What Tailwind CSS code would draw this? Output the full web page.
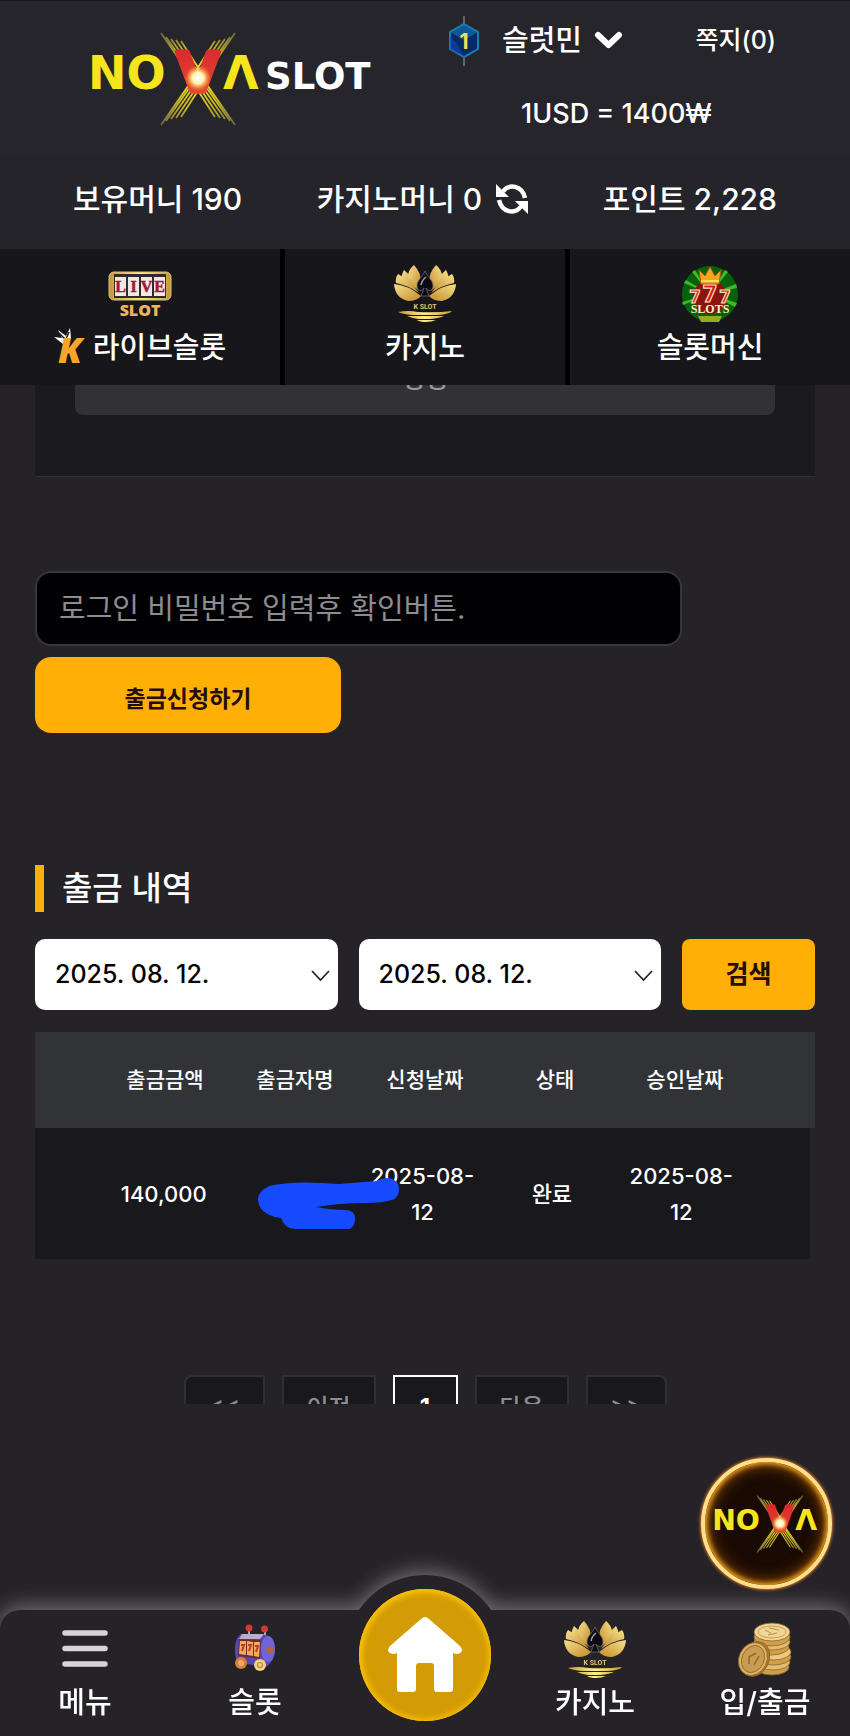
<!DOCTYPE html>
<html lang="ko">
<head>
  <meta charset="UTF-8">
  <meta name="viewport" content="width=device-width, initial-scale=1.0">
  <title>NOVA SLOT - 출금 내역</title>
  <script src="https://cdn.jsdelivr.net/npm/@tailwindcss/browser@4"></script>
</head>
<body class="relative h-screen flex flex-col overflow-hidden bg-[#262328] text-white font-medium font-['Inter','Noto_Sans_CJK_KR',sans-serif]">

<!-- Shared artwork -->
<svg class="absolute w-0 h-0" aria-hidden="true">
  <defs>
    <linearGradient id="gold" x1="0" y1="0" x2="1" y2="1">
      <stop offset="0" stop-color="#f6e08a"/><stop offset="1" stop-color="#c48a2a"/>
    </linearGradient>
    <linearGradient id="goldBar" x1="0" y1="0" x2="1" y2="0">
      <stop offset="0" stop-color="#c8963a"/><stop offset=".5" stop-color="#fbf08a"/><stop offset="1" stop-color="#c8963a"/>
    </linearGradient>
    <linearGradient id="red" x1="0" y1="0" x2="0" y2="1">
      <stop offset="0" stop-color="#d8232f"/><stop offset="1" stop-color="#e8502c"/>
    </linearGradient>
    <radialGradient id="ray" gradientUnits="userSpaceOnUse" cx="107" cy="47" r="58">
      <stop offset="0" stop-color="#ffee30"/><stop offset=".5" stop-color="#cdbb20"/><stop offset="1" stop-color="#6c6a44"/>
    </radialGradient>
    <radialGradient id="flare">
      <stop offset="0" stop-color="#fff"/><stop offset=".45" stop-color="#fff3b0"/><stop offset="1" stop-color="#ffb020" stop-opacity="0"/>
    </radialGradient>
    <symbol id="nova" viewBox="0 0 172 94">
      <g id="rays" stroke="url(#ray)" stroke-width="1.8">
        <path id="beam" d="M70 1 102 47M75 5 104 46M80 7 106 44M85 8 108 42M90 9 110 40"/>
        <use href="#beam" transform="matrix(-1 0 0 1 214 0)"/>
      </g>
      <use href="#rays" transform="matrix(1 0 0 -1 0 94)"/>
      <g font-family="DejaVu Sans" font-weight="700" fill="#f6e51d">
        <text x="-3" y="57" font-size="46">NO</text>
        <text x="132" y="57" font-size="46">Λ</text>
        <text x="107" y="59" font-size="54" text-anchor="middle" fill="url(#red)" stroke="url(#red)" stroke-width="5" stroke-linejoin="round">V</text>
      </g>
      <circle cx="107" cy="46" r="13" fill="url(#flare)"/>
    </symbol>
    <symbol id="lotus" viewBox="0 0 62 58">
      <g id="petals" fill="url(#gold)">
        <path d="M0 19Q14 20 27 31Q23 36 14 36Q1 33 0 19Z"/>
        <path d="M4 9Q16 15 25 28Q13 20 2 18Q1 13 4 9Z"/>
        <path d="M10 5Q20 13 24 25Q14 17 8 14Q7 10 10 5Z"/>
        <path d="M20 0Q28 9 26 16Q23 19 25 26Q15 16 14 10Q15 4 20 0Z"/>
      </g>
      <use href="#petals" transform="matrix(-1 0 0 1 62 0)"/>
      <path d="M31 6C28 13 23 15 23 21C23 26 28 27 30 23L27 31H35L32 23C34 27 39 26 39 21C39 15 34 13 31 6Z" fill="#0b0b10" stroke="#6a6875" stroke-width=".8"/>
      <path d="M27 20Q28 15 32 12" fill="none" stroke="#a5a3b0" stroke-width="1.5"/>
      <text x="31" y="44" text-anchor="middle" font-family="Roboto" font-weight="700" font-size="7" fill="#e9c46c">K SLOT</text>
      <path d="M4 47Q14 45 24 47Q42 48 58 46Q56 49 44 50H18Q8 49 4 47ZM13 51H50Q46 53 36 54H24Q17 53 13 51ZM23 55H42Q38 57 32 57Q26 57 23 55Z" fill="url(#goldBar)"/>
    </symbol>
  </defs>
</svg>

<!-- Header -->
<header class="shrink-0 bg-[#26252b] border-t border-[#141318]">
  <div class="flex justify-between h-[154px] pl-[91px] pr-[74px]">
    <a href="#" aria-label="NOVA SLOT" class="pt-[31px]">
      <svg class="w-[286px] h-[94px]" viewBox="0 0 286 94">
        <use href="#nova" width="172" height="94"/>
        <text x="174" y="57" font-family="DejaVu Sans" font-weight="700" font-size="37" fill="#fff">SLOT</text>
      </svg>
    </a>
    <div class="flex flex-col w-[328px]">
      <div class="flex items-center h-[80px]">
        <svg class="w-[32px] h-[50px] mr-[22px]" viewBox="0 0 32 50">
          <path d="M16 0V50" stroke="#77777c" stroke-width="1.5"/>
          <path d="M16 8 30 16V33L16 41 2 33V16Z" fill="#0a2a66" stroke="#1b7fb0" stroke-width="2"/>
          <path d="M16 8 30 16 16 24 2 16Z" fill="#117ab4" opacity=".6"/>
          <path d="M16 41 2 33V20L9 28Z" fill="#1248b8" opacity=".6"/>
          <text x="16" y="33" text-anchor="middle" font-family="Inter" font-weight="700" font-size="21" fill="#f1df5c">1</text>
        </svg>
        <button class="flex items-center gap-3 text-[29px]">슬럿민
          <svg class="w-[29px] h-[20px]" viewBox="0 0 29 20" fill="none" stroke="#fff" stroke-width="6" stroke-linecap="round" stroke-linejoin="round"><path d="M4 4 14.500 14 25 4"/></svg>
        </button>
        <a href="#" class="ml-auto text-[25px]">쪽지(0)</a>
      </div>
      <p class="pl-[73px] text-[27px] leading-[66px]">1USD = 1400₩</p>
    </div>
  </div>
  <div class="flex items-center justify-between h-[94px] px-[73px] pb-[6px] text-[30px] bg-[#25242a]">
    <p>보유머니 190</p>
    <p class="flex items-center gap-[14px]">카지노머니 0
      <button aria-label="새로고침">
        <svg class="w-8 h-8" viewBox="0 0 32 32" fill="none" stroke="#fff" stroke-width="4.500">
          <path d="M7 8.500C13 .5 26 2 29 15"/><path d="M25 23.500C19 31.500 6 30 3 17"/>
          <path d="M0 1V14H13Z M32 31V18H19Z" fill="#fff" stroke="none"/>
        </svg>
      </button>
    </p>
    <p>포인트 2,228</p>
  </div>
  <nav class="grid grid-cols-3 gap-[5px] h-[136px] bg-black text-[29px] leading-[40px]">
    <a href="#" class="flex flex-col items-center bg-[#17161a] pt-4">
      <svg class="w-[64px] h-[60px] mb-[3px]" viewBox="0 0 64 60">
        <rect x="1" y="7" width="62" height="28" rx="5" fill="url(#goldBar)" stroke="#d9c27a"/>
        <rect x="6" y="9" width="52" height="24" fill="#33282a"/>
        <path d="M7 12H18V31H7ZM20 12H31V31H20ZM33 12H44V31H33ZM46 12H57V31H46Z" fill="#efe9e6"/>
        <g font-family="Liberation Serif" font-weight="700" font-size="16" fill="#a01832" stroke="#a01832" stroke-width=".5" text-anchor="middle">
          <text x="12.500" y="27">L</text><text x="25.500" y="27">I</text><text x="38.500" y="27">V</text><text x="51.500" y="27">E</text>
        </g>
        <text x="32" y="51" text-anchor="middle" font-family="Open Sans" font-weight="800" font-size="16" fill="#f0b45a">SLOT</text>
      </svg>
      <span class="flex items-center gap-[5px]">
        <svg class="w-[34px] h-[36px] mb-1 overflow-visible" viewBox="0 0 34 36">
          <path d="M0 9 8 10 4 2 12 8 16 0 17 10 11 14 9 16Z" fill="#fff"/>
          <path d="M5 5 12 12M15 4 12 11" stroke="#17161a" stroke-width="1.500"/>
          <text x="4" y="35" font-family="Open Sans" font-weight="800" font-style="italic" font-size="36" fill="#f8a52d">K</text>
        </svg>
        라이브슬롯
      </span>
    </a>
    <a href="#" class="flex flex-col items-center bg-[#17161a] pt-4">
      <svg class="w-[62px] h-[58px] mb-[5px]"><use href="#lotus"/></svg>
      카지노
    </a>
    <a href="#" class="flex flex-col items-center bg-[#17161a] pt-4">
      <svg class="w-[58px] h-[58px] mb-[5px]" viewBox="0 0 58 58">
        <circle cx="29" cy="29" r="28" fill="#07600b"/>
        <path d="M29 29 3 18 5 15ZM29 29 11 7 14 5ZM29 29 44 5 47 7ZM29 29 55 19 56 23ZM29 29 56 38 54 42ZM29 29 2 40 1 37Z" fill="#3bbb28"/>
        <circle cx="29" cy="32" r="17" fill="#8c1410"/>
        <path d="M20 19 18 5 24 11 29 2 34 11 40 5 38 19Z" fill="#f2a51d" stroke="#a85a0c"/>
        <path d="M20 16H38" stroke="#ffd95e" stroke-width="2"/>
        <g font-family="Roboto" font-weight="900" fill="#d21a1c" stroke="#ffdfae" stroke-width="1.200" text-anchor="middle">
          <text x="14" y="38" font-size="18">7</text><text x="44" y="38" font-size="18">7</text><text x="29" y="37" font-size="24">7</text>
        </g>
        <path d="M17 51H41L38 57H20Z" fill="#8fae20"/>
        <text x="29" y="48" text-anchor="middle" font-family="Liberation Serif" font-weight="700" font-size="12" fill="#fff0c8">SLOTS</text>
      </svg>
      슬롯머신
    </a>
  </nav>
</header>

<!-- Scrolled content -->
<main class="flex-1 min-h-0 overflow-hidden px-[35px] mb-[206px]">
  <div class="-mt-10 px-10 pb-[61px] bg-[#1b1a1e] border-b border-[#313136]">
    <button class="block w-full h-[70px] rounded-lg bg-[#323136] text-[25px] text-[#9a999e]">정정</button>
  </div>

  <form class="mt-[94px]">
    <input type="password" aria-label="로그인 비밀번호" placeholder="로그인 비밀번호 입력후 확인버튼." class="block w-[83%] h-[75px] px-[22px] rounded-2xl border-2 border-[#37363b] bg-[#010003] text-[29px] font-normal placeholder:text-[#8d8c90]">
    <button type="button" class="block w-[306px] h-[76px] mt-[11px] pt-2 rounded-2xl bg-[#ffaf05] text-[23px] font-bold text-[#220e0c]">출금신청하기</button>
  </form>

  <h2 class="mt-[132px] border-l-[9px] border-[#fbae10] pl-[18px] text-[33px] leading-[47px]">출금 내역</h2>

  <form class="flex gap-[21px] mt-[27px] text-[25px]">
    <div class="relative flex-1">
      <select aria-label="시작일" class="w-full h-[71px] pl-5 rounded-[10px] bg-white text-black appearance-none">
        <option>2025. 08. 12.</option>
      </select>
      <svg class="absolute right-2 top-[31px] w-[19px] h-[12px]" viewBox="0 0 19 12" fill="none" stroke="#222" stroke-width="1.700"><path d="M1 1 9.500 10 18 1"/></svg>
    </div>
    <div class="relative flex-1">
      <select aria-label="종료일" class="w-full h-[71px] pl-5 rounded-[10px] bg-white text-black appearance-none">
        <option>2025. 08. 12.</option>
      </select>
      <svg class="absolute right-2 top-[31px] w-[19px] h-[12px]" viewBox="0 0 19 12" fill="none" stroke="#222" stroke-width="1.700"><path d="M1 1 9.500 10 18 1"/></svg>
    </div>
    <button type="button" class="w-[133px] h-[71px] rounded-lg bg-[#ffaf05] text-[#220e0c] font-bold">검색</button>
  </form>

  <div class="relative mt-[22px]">
    <table class="block text-[21px] leading-[36px]">
      <thead class="block bg-[#323337]">
        <tr class="flex items-center h-[96px] px-[65px]">
          <th class="w-1/5 font-medium">출금금액</th>
          <th class="w-1/5 font-medium">출금자명</th>
          <th class="w-1/5 font-medium">신청날짜</th>
          <th class="w-1/5 font-medium">상태</th>
          <th class="w-1/5 font-medium">승인날짜</th>
        </tr>
      </thead>
      <tbody class="block mr-[5px] bg-[#19181c] text-center text-[22px]">
        <tr class="flex items-center h-[131px] px-[64px]">
          <td class="w-1/5">140,000</td>
          <td class="w-1/5"></td>
          <td class="w-1/5 px-2">2025-08-12</td>
          <td class="w-1/5">완료</td>
          <td class="w-1/5 px-2">2025-08-12</td>
        </tr>
      </tbody>
    </table>
    <!-- Name is scribbled out -->
    <svg class="absolute left-[220px] top-[144px] w-[146px] h-[56px]" viewBox="0 0 146 56" fill="#164bff">
      <path d="M14 10Q38 4 84 8L122 5Q126 2 134 2Q144 4 144 13Q144 22 137 24Q126 27 112 27Q84 27 61 31Q75 34 91 34Q101 35 100 44Q99 52 94 53H40Q30 53 26 42Q10 40 5 31Q-2 18 14 10Z"/>
    </svg>
  </div>

  <div class="flex justify-center gap-[17px] mt-[116px] text-[24px] text-[#8d8c90]">
    <button aria-label="처음" class="w-[81px] h-[74px] rounded-l-lg border-2 border-[#303034] bg-[#19181c] pb-[14px]">&lt;&lt;</button>
    <button class="w-[94px] h-[74px] border-2 border-[#303034] bg-[#19181c] pb-2">이전</button>
    <button class="w-[65px] h-[74px] border-2 border-white bg-[#19181c] text-white font-bold pb-2">1</button>
    <button class="w-[94px] h-[74px] border-2 border-[#303034] bg-[#19181c] pb-2">다음</button>
    <button aria-label="마지막" class="w-[81px] h-[74px] rounded-r-lg border-2 border-[#303034] bg-[#19181c] pb-[14px]">&gt;&gt;</button>
  </div>
</main>

<!-- Bottom bar -->
<nav class="relative shrink-0 h-[126px] drop-shadow-[0_-4px_10px_rgb(255_255_255/0.35)]">
  <div class="absolute left-1/2 -top-[35px] -translate-x-1/2 size-[160px] rounded-full bg-[#262328]"></div>
  <div class="relative grid grid-cols-5 h-full rounded-t-[20px] bg-[#262328] text-[29px] leading-[42px]">
    <a href="#" class="flex flex-col items-center pt-[9px]">
      <svg class="w-[46px] h-[60px] mb-[3px]" viewBox="0 0 46 60" stroke="#d7d3d9" stroke-width="5.500" stroke-linecap="round"><path d="M3 14H43M3 29.500H43M3 45H43"/></svg>
      메뉴
    </a>
    <a href="#" class="flex flex-col items-center pt-[9px]">
      <svg class="w-[46px] h-[60px] mb-[3px]" viewBox="0 0 46 60">
        <path d="M17 10V18M33 11V18" stroke="#b8a4a8" stroke-width="2"/>
        <circle cx="17" cy="9" r="3.500" fill="#cf3a34"/><circle cx="32.500" cy="10" r="3.500" fill="#cf3a34"/>
        <path d="M9 15Q4 18 3 28Q2 41 8 44L34 48Q43 42 43 30Q42 16 33 16Z" fill="#5547b5"/>
        <ellipse cx="36" cy="30" rx="7" ry="13" fill="#7264d8"/>
        <path d="M10 15H32L28 20H7Z" fill="#b9b0c8"/>
        <path d="M7 20 29 21 28 40 6 37Z" fill="#6e2c2c"/>
        <path d="M8 22 14 22V36L7 35ZM15 22 21 23V37L15 36ZM22 23 28 23 27 38 22 37Z" fill="#f2a95e"/>
        <path d="M9 26H12L10 32M16 26H19L17 32M23 27H26L24 33" fill="none" stroke="#bd3c24" stroke-width="2"/>
        <circle cx="38" cy="31" r="3.500" fill="#b2643c"/>
        <circle cx="9" cy="44" r="6" fill="#d97e38"/><circle cx="9" cy="44" r="3" fill="#f0aa62"/>
        <circle cx="28" cy="46" r="6" fill="#f1d287"/><circle cx="28" cy="46" r="2.500" fill="none" stroke="#b38638" stroke-width="1.200"/>
      </svg>
      슬롯
    </a>
    <a href="#" aria-label="홈" class="justify-self-center -mt-[21px] flex items-center justify-center size-[132px] rounded-full bg-[#d39b05] shadow-[inset_0_3px_7px_#f9c20c,inset_3px_0_6px_#f5bd08,inset_-2px_-2px_6px_#eab308]">
      <svg class="w-[74px] h-[76px]" viewBox="0 0 74 76" fill="#fff">
        <path d="M33 2Q37-2 41 2L72 29Q76 34 72 36Q69 38 65 36V72Q65 75 62 75H49Q46 75 46 72V49Q46 46 43 46H31Q28 46 28 49V72Q28 75 25 75H12Q9 75 9 72V36Q5 38 2 36Q-2 34 2 29Z"/>
      </svg>
    </a>
    <a href="#" class="flex flex-col items-center pt-[11px]">
      <svg class="w-[62px] h-[58px] mb-[3px]"><use href="#lotus"/></svg>
      카지노
    </a>
    <a href="#" class="flex flex-col items-center pt-[11px]">
      <svg class="w-[54px] h-[58px] mb-[3px]" viewBox="0 0 54 58" stroke="#8d6428" stroke-width=".8">
        <g fill="#cf9f4c">
          <ellipse cx="34" cy="46" rx="17" ry="8"/><ellipse cx="35" cy="41" rx="17" ry="8" fill="#e5bd70"/>
          <ellipse cx="35" cy="36" rx="18" ry="8"/><ellipse cx="35" cy="31" rx="18" ry="8" fill="#ecca82"/>
          <ellipse cx="33" cy="26" rx="18" ry="8"/><ellipse cx="34" cy="21" rx="18" ry="8" fill="#e5bd70"/>
          <ellipse cx="34" cy="16" rx="18" ry="9"/>
        </g>
        <ellipse cx="34" cy="11" rx="18" ry="9" fill="#f0d797"/>
        <ellipse cx="34" cy="11" rx="14" ry="6" fill="none" stroke="#bb8e45"/>
        <path d="M27 9 33 12M31 7 41 9M30 14 39 12" stroke="#a87b35"/>
        <ellipse cx="17" cy="38" rx="14" ry="18" transform="rotate(25 17 38)" fill="#a8772f"/>
        <ellipse cx="15" cy="38" rx="14" ry="17" transform="rotate(25 15 38)" fill="#dcb066"/>
        <ellipse cx="15" cy="38" rx="11" ry="14" transform="rotate(25 15 38)" fill="#ca9b52"/>
        <path d="M11 43V36L18 32M16 44 21 35" fill="none" stroke="#95682b" stroke-width="1.500"/>
      </svg>
      입/출금
    </a>
  </div>
</nav>

<!-- Floating shortcut -->
<a href="#" aria-label="NOVA" class="absolute right-[18px] bottom-[147px] flex items-center justify-center size-[131px] rounded-full border-4 border-[#ffe08a] bg-[#190a03] shadow-[0_0_3px_1px_#d8742c,inset_0_0_5px_2px_#f5a31c,inset_0_0_16px_3px_#8a4a08]">
  <svg class="w-[106px] h-[58px]"><use href="#nova"/></svg>
</a>
</body>
</html>
